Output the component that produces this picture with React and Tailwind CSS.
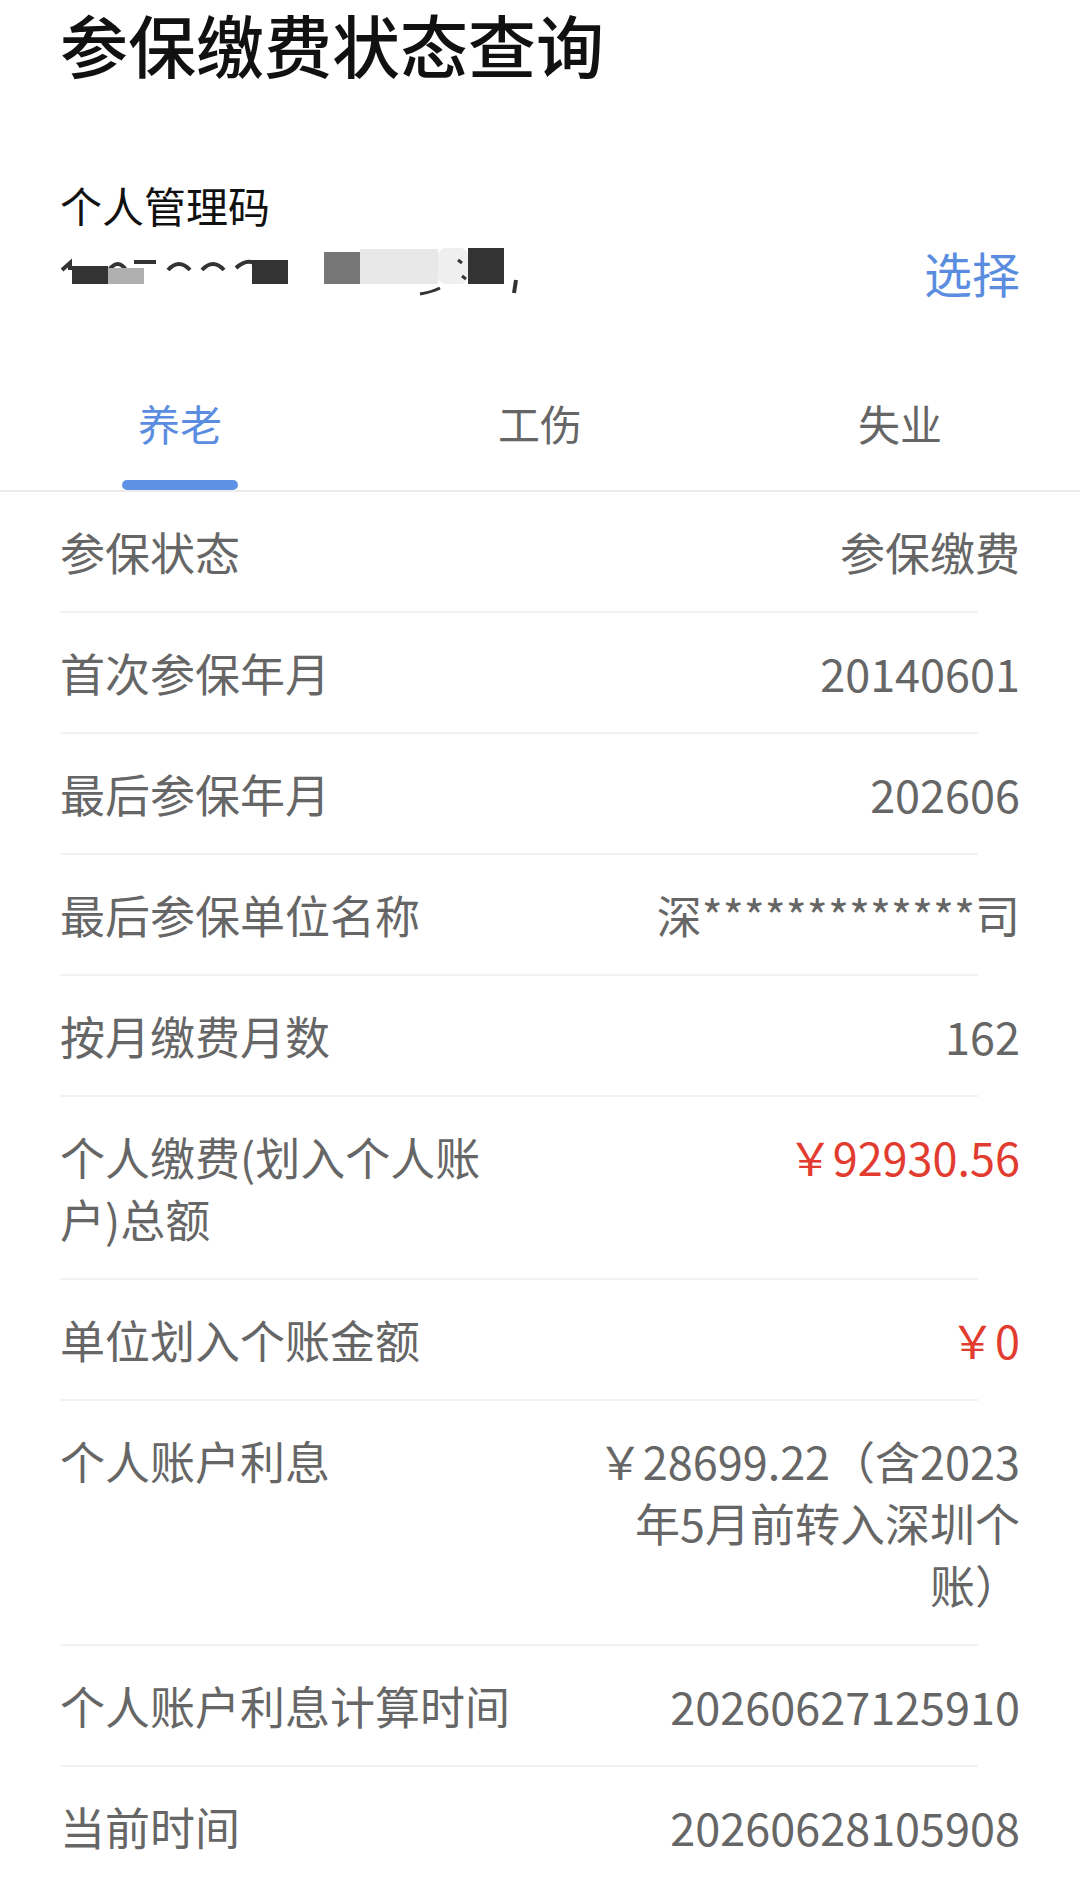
const rows = [
  { label: '参保状态', value: '参保缴费' },
  { label: '首次参保年月', value: '20140601' },
  { label: '最后参保年月', value: '202606' },
  { label: '最后参保单位名称', value: '深*************司' },
  { label: '按月缴费月数', value: '162' },
  { label: '个人缴费(划入个人账户)总额', value: '￥92930.56', red: true },
  { label: '单位划入个账金额', value: '￥0', red: true },
  { label: '个人账户利息', value: '￥28699.22（含2023年5月前转入深圳个账）' },
  { label: '个人账户利息计算时间', value: '20260627125910' },
  { label: '当前时间', value: '20260628105908' },
]

// the blurred-out management code is a picture, drawn as a mask
function MaskedCode() {
  return (
    <svg width="470" height="50" viewBox="0 0 470 50">
      <g fill="none" stroke="#333" strokeWidth="4">
        <path d="M2 24 L10 17 L10 24" />
        <path d="M49 24 Q58 12 66 24" />
        <path d="M74 16 H96" />
        <path d="M108 24 Q119 12 130 24" />
        <path d="M142 24 Q153 12 164 24" />
        <path d="M176 22 Q186 13 194 17" />
      </g>
      <rect x="12" y="20" width="36" height="18" fill="#333" />
      <rect x="48" y="22" width="36" height="16" fill="#b0b0b0" />
      <rect x="192" y="14" width="36" height="24" fill="#333" />
      <rect x="264" y="6" width="36" height="32" fill="#777" />
      <rect x="300" y="3" width="78" height="35" fill="#e8e8e8" />
      <rect x="378" y="2" width="30" height="36" rx="8" fill="#efefef" />
      <rect x="408" y="2" width="36" height="36" fill="#333" />
      <path d="M398 14 l4 3 M402 30 l4 3 M360 48 Q372 46 380 42" stroke="#333" strokeWidth="3" fill="none" />
      <path d="M456 34 L454 47" stroke="#333" strokeWidth="4" />
    </svg>
  )
}

export default function App() {
  const tabs = ['养老', '工伤', '失业']

  return (
    <div
      className="w-[1080px] h-[1881px] overflow-hidden bg-white"
      style={{ fontFamily: '"Noto Sans CJK SC", "Noto Sans", sans-serif' }}
    >
      <div className="px-[60px]">
        <h1 className="pt-[4px] text-[68px] leading-[80px] font-medium text-[#111]">参保缴费状态查询</h1>

        <div className="mt-[96px] text-[42px] leading-[50px] text-[#111]">个人管理码</div>

        <div className="mt-[12px] flex items-center justify-between">
          <MaskedCode />
          <button className="text-[48px] leading-[56px] text-[#5a8de0] pt-[2px]">选择</button>
        </div>
      </div>

      {/* tabs */}
      <div className="mt-[98px] grid grid-cols-3 border-b-2 border-[#ebebeb]">
        {tabs.map((t, i) => (
          <div key={t} className="flex flex-col items-center">
            <span className={`text-[42px] leading-[50px] ${i === 0 ? 'text-[#5a8de0]' : 'text-[#666]'}`}>{t}</span>
            <div className={`mt-[32px] h-[10px] w-[116px] rounded-full ${i === 0 ? 'bg-[#5e91e3]' : 'bg-transparent'}`} />
          </div>
        ))}
      </div>

      <div className="pl-[60px] pr-[60px]">
        {rows.map((r) => (
          <div key={r.label}>
            <div className="flex justify-between pt-[29px] pb-[28px] text-[45px] leading-[62px]">
              <div className="max-w-[460px] text-[#666]">{r.label}</div>
              <div className={`max-w-[425px] text-right ${r.red ? 'text-[#e23b30]' : 'text-[#666]'}`}>{r.value}</div>
            </div>
            <div className="h-[2px] w-[918px] bg-[#f2f2f2]" />
          </div>
        ))}
      </div>
    </div>
  )
}
